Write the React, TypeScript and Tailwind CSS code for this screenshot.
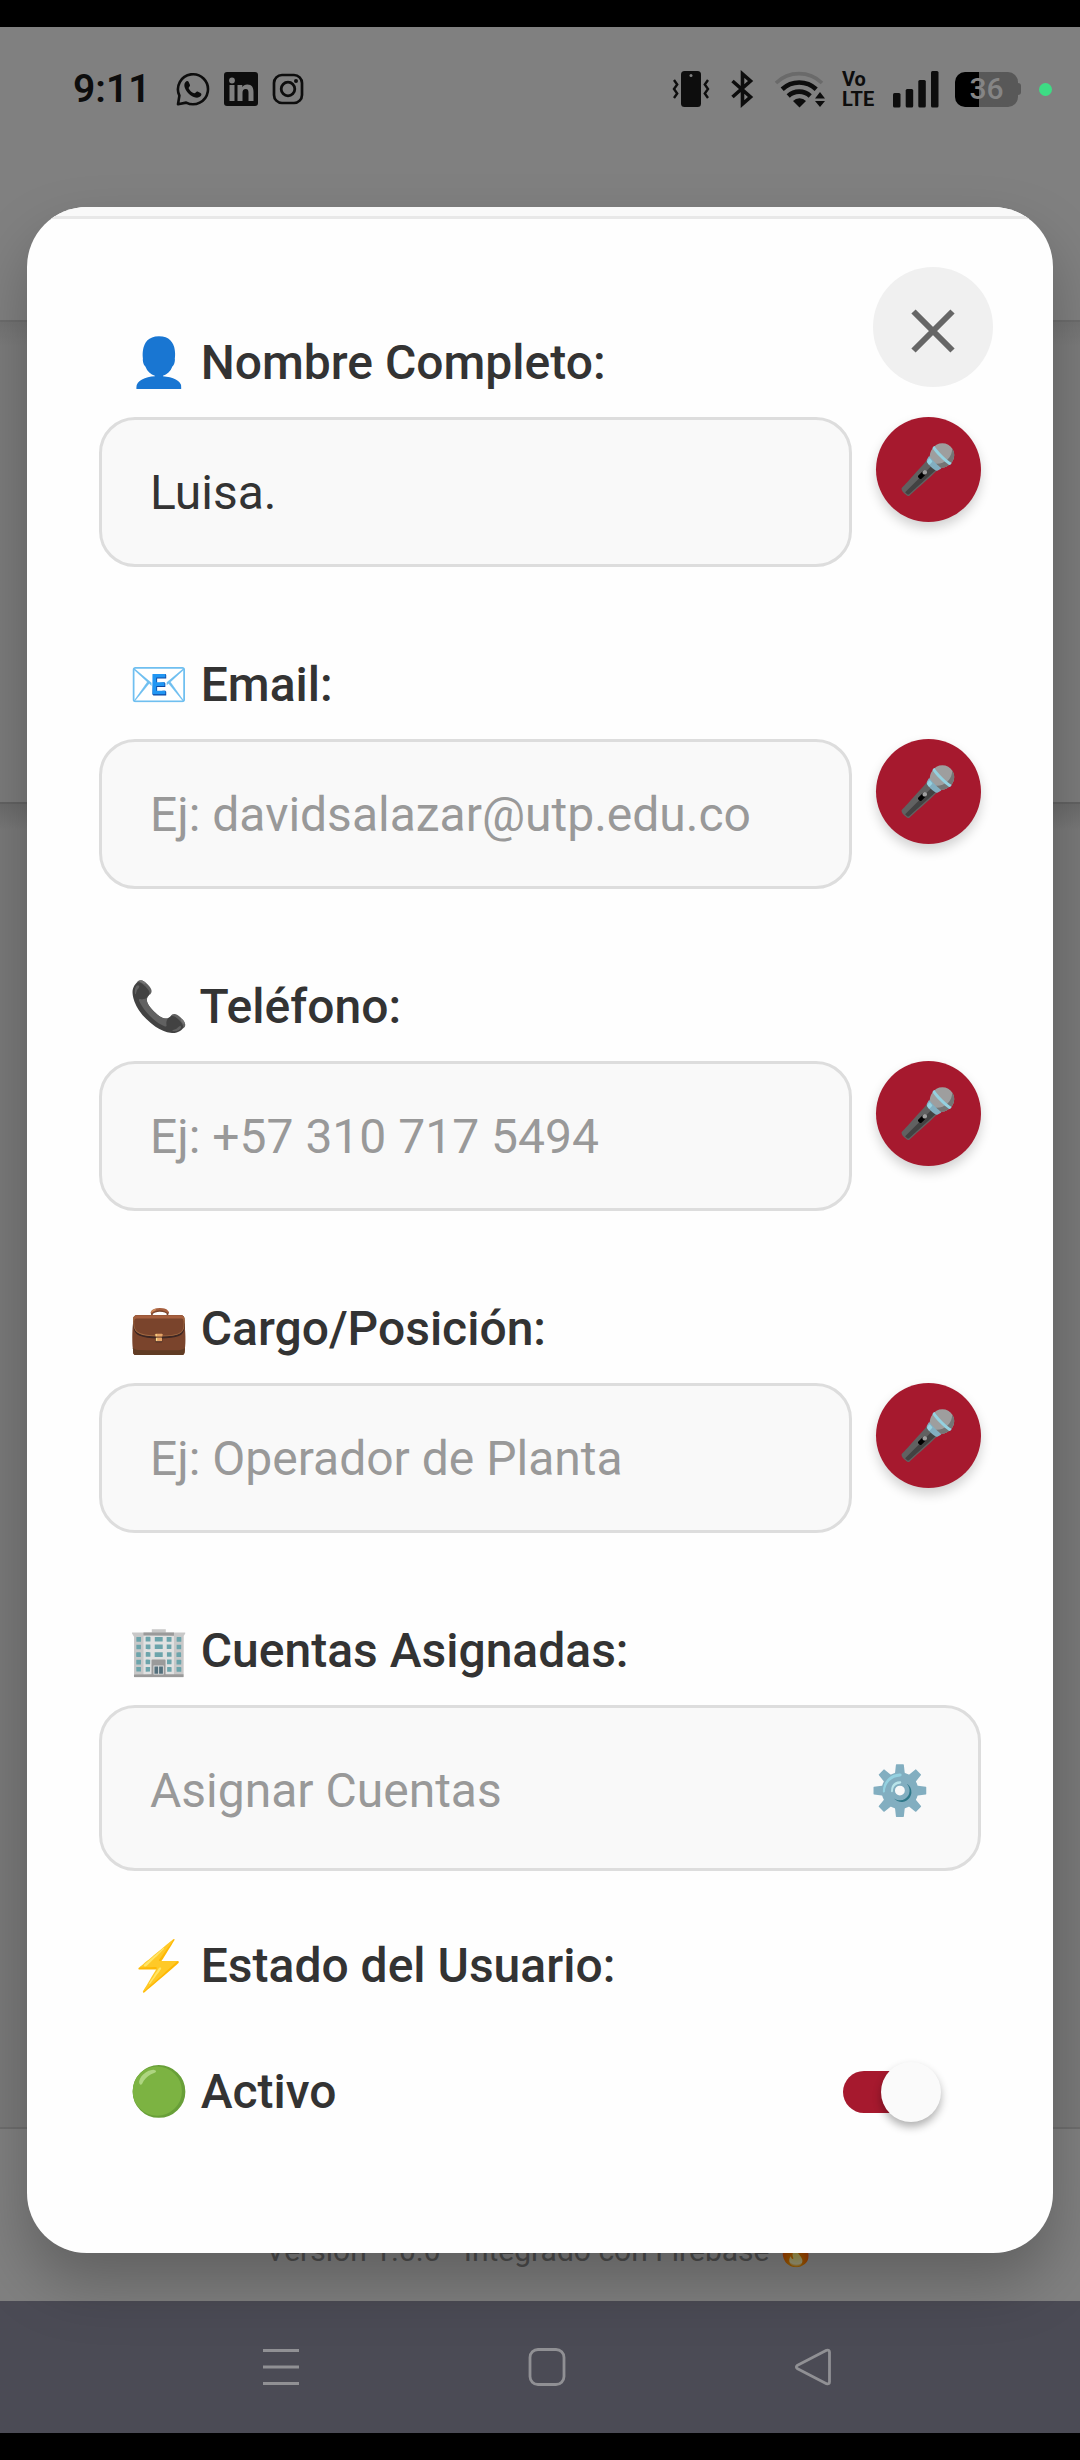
import { useId, useState } from "react";
import type { ReactNode } from "react";

const emojiFont =
  "font-['Roboto','Noto_Color_Emoji',sans-serif]";

/* ---------- Status bar icons ---------- */

function WhatsappIcon() {
  return (
    <svg viewBox="0 0 34 34" className="h-[34px] w-[34px]" fill="none" aria-hidden="true">
      <path
        d="M2 32.2 3.4 23.6A15 15 0 1 1 10.2 30.6Z"
        stroke="#0d0d0d"
        strokeWidth="2.6"
        strokeLinejoin="round"
      />
      <path
        d="M9.3 10.2c1.3-1.7 2.8-1.6 3.5 0l1.2 2.7c.5 1.3-1.9 2.3-1.3 3.5 1.200 2.300 3 4 5.400 4.900 1.200.4 2.200-2.200 3.500-1.700l2.900 1.400c1.500.8 1 2.400-.3 3.600-2.300 2-6.500.9-9.700-1.400-2.400-1.700-4.600-4.200-5.600-7.100-.7-2.100-.9-4.300.4-5.900Z"
        fill="#0d0d0d"
      />
    </svg>
  );
}

function LinkedinIcon() {
  return (
    <svg viewBox="0 0 34 34" className="h-[34px] w-[34px]" aria-hidden="true">
      <rect width="34" height="34" rx="3" fill="#0d0d0d" />
      <g fill="#808080">
        <circle cx="8" cy="8.5" r="2.9" />
        <rect x="5.5" y="13" width="5" height="16" />
        <path d="M13.5 13h4.8v2.2c.9-1.500 2.700-2.600 5-2.600 4.700 0 6.200 3 6.200 7.400v9h-5v-8.200c0-2.200-.5-3.900-2.700-3.900-2.400 0-3.300 1.700-3.300 3.900V29h-5Z" />
      </g>
    </svg>
  );
}

function InstagramIcon() {
  return (
    <svg viewBox="0 0 32 32" className="h-8 w-8" fill="none" stroke="#0d0d0d" aria-hidden="true">
      <rect x="2" y="2" width="28" height="28" rx="8" strokeWidth="2.7" />
      <circle cx="16" cy="16" r="6.8" strokeWidth="2.8" />
      <circle cx="24" cy="8" r="2" fill="#0d0d0d" stroke="none" />
    </svg>
  );
}

function VibrateIcon() {
  return (
    <svg viewBox="0 0 38 38" className="h-[38px] w-[38px]" fill="none" aria-hidden="true">
      <rect x="9" y="1" width="20" height="36" rx="3.5" fill="#0d0d0d" />
      <circle cx="19" cy="5.5" r="1.5" fill="#808080" />
      <path
        d="m2 10 3.200 4.500L2 19l3.200 4.500L2 28M36 10l-3.200 4.500L36 19l-3.200 4.500L36 28"
        stroke="#0d0d0d"
        strokeWidth="2.4"
      />
    </svg>
  );
}

function BluetoothIcon() {
  return (
    <svg viewBox="0 0 24 38" className="h-[38px] w-6" fill="none" aria-hidden="true">
      <path
        d="M2.500 11 20.500 27 12.500 34V4l8 7-18 16"
        stroke="#0d0d0d"
        strokeWidth="3.6"
      />
    </svg>
  );
}

function WifiIcon() {
  return (
    <svg viewBox="0 0 52 38" className="h-[38px] w-[52px]" fill="none" aria-hidden="true">
      <path d="M2 13a33 33 0 0 1 46 0" stroke="#6a6a6a" strokeWidth="3.6" />
      <path d="M8.200 19.200a25 25 0 0 1 34 0" stroke="#0d0d0d" strokeWidth="4.6" />
      <path d="M14.200 26a16 16 0 0 1 22 0" stroke="#0d0d0d" strokeWidth="4.6" />
      <path d="M19 31a9 9 0 0 1 13 0L25.500 37.500Z" fill="#0d0d0d" />
      <path d="m46 22 5 6.500H41ZM46 37l-5-6h10Z" fill="#0d0d0d" />
    </svg>
  );
}

function SignalIcon() {
  return (
    <svg viewBox="0 0 46 38" className="h-[38px] w-[46px]" fill="#0d0d0d" aria-hidden="true">
      <rect x="0" y="23" width="7.5" height="14.500" rx="1.5" />
      <rect x="12.7" y="19" width="7.5" height="18.500" rx="1.5" />
      <rect x="25.3" y="10" width="7.5" height="27.500" rx="1.5" />
      <rect x="38" y="1" width="7.5" height="36.500" rx="1.5" />
    </svg>
  );
}

function Battery() {
  return (
    <div className="flex items-center">
      <div className="flex h-[35px] w-[63px] items-center justify-center rounded-[10px] bg-linear-to-r from-black from-38% to-[#585858] to-38%">
        <span className="text-3xl font-medium text-[#858585]">36</span>
      </div>
      <div className="h-3 w-[3px] rounded-r-sm bg-[#585858]" />
    </div>
  );
}

function StatusBar() {
  return (
    <header className="flex h-[293px] items-start justify-between bg-[#808080] pt-[43px] pr-7 pl-[73px] text-[#0d0d0d]">
      <div className="flex h-[38px] items-center">
        <time className="text-[39px] leading-none font-semibold">9:11</time>
        <div className="ml-[26px] flex items-center gap-3.5">
          <WhatsappIcon />
          <LinkedinIcon />
          <InstagramIcon />
        </div>
      </div>
      <div className="flex h-[38px] items-center">
        <VibrateIcon />
        <div className="ml-5">
          <BluetoothIcon />
        </div>
        <div className="ml-5">
          <WifiIcon />
        </div>
        <p className="ml-4 w-8 text-xl leading-5 font-bold">
          Vo
          <br />
          LTE
        </p>
        <div className="ml-[19px]">
          <SignalIcon />
        </div>
        <div className="ml-4">
          <Battery />
        </div>
        <div className="ml-[18px] h-[13px] w-[13px] rounded-full bg-[#3ddc84]" />
      </div>
    </header>
  );
}

/* ---------- Screen behind the dialog ---------- */

function NavBar() {
  return (
    <nav className="flex h-[132px] items-center justify-center gap-[202px] bg-[#4b4b55] pl-3.5">
      <button type="button" aria-label="Recientes" className="flex h-16 w-16 items-center justify-center">
        <svg viewBox="0 0 38 38" className="h-[38px] w-[38px]" stroke="#909094" strokeWidth="3" aria-hidden="true">
          <path d="M1 2.500h36M1 19h36M1 35.500h36" />
        </svg>
      </button>
      <button type="button" aria-label="Inicio" className="flex h-16 w-16 items-center justify-center">
        <svg viewBox="0 0 38 38" className="h-[38px] w-[38px]" fill="none" stroke="#909094" strokeWidth="2.8" aria-hidden="true">
          <rect x="2" y="1.5" width="34" height="35" rx="8" />
        </svg>
      </button>
      <button type="button" aria-label="Atrás" className="flex h-16 w-16 items-center justify-center">
        <svg viewBox="0 0 38 38" className="h-[38px] w-[38px]" fill="none" stroke="#909094" strokeWidth="2.8" strokeLinejoin="round" aria-hidden="true">
          <path d="M32.500 2.300 3.600 17.200q-2.600 1.800 0 3.600L32.500 35.700q3 1 3-2V4.300q0-3-3-2Z" />
        </svg>
      </button>
    </nav>
  );
}

function Backdrop() {
  return (
    <div className="col-start-1 row-start-1 flex flex-col">
      <StatusBar />
      <div className="h-[482px] border-t-2 border-[#6d6d6d] bg-linear-to-b from-[#747474] to-[#7c7c7c] to-5%" />
      <div className="flex-1 border-t-2 border-[#636363] bg-linear-to-b from-[#6c6c6c] to-[#7a7a7a] to-2%" />
      <footer className="flex h-[174px] items-end justify-center border-t-2 border-[#6e6e6e] bg-[#808080] pb-8">
        <p className="text-3xl leading-9 text-[#4d4d4d]">
          Versión 1.0.0 - Integrado con Firebase <span className="brightness-50">🔥</span>
        </p>
      </footer>
      <NavBar />
    </div>
  );
}

/* ---------- Form ---------- */

function MicButton({ label }: { label: string }) {
  return (
    <button
      type="button"
      aria-label={`Dictar ${label}`}
      className="flex h-[105px] w-[105px] shrink-0 items-center justify-center rounded-full bg-[#a6192e] text-5xl shadow-[0_6px_12px_rgba(0,0,0,0.18)]"
    >
      🎤
    </button>
  );
}

const labelClass = "px-[30px] text-5xl leading-[56px] font-medium text-[#333333]";

function Field(props: { icon: string; label: string; type: string; placeholder?: string; value?: string }) {
  const id = useId();
  return (
    <div className="flex flex-col gap-[26px]">
      <label htmlFor={id} className={labelClass}>
        {props.icon} {props.label}:
      </label>
      <div className="flex items-start gap-6">
        <input
          id={id}
          type={props.type}
          defaultValue={props.value}
          placeholder={props.placeholder}
          className="h-[150px] min-w-0 flex-1 rounded-[36px] border-[3px] border-[#dddddd] bg-[#f9f9f9] px-12 text-5xl text-[#333333] outline-none placeholder:text-[#999999] placeholder:opacity-100"
        />
        <MicButton label={props.label} />
      </div>
    </div>
  );
}

function AccountsPicker() {
  const id = useId();
  return (
    <div className="flex flex-col gap-[26px]">
      <label htmlFor={id} className={labelClass}>
        🏢 Cuentas Asignadas:
      </label>
      <button
        id={id}
        type="button"
        className="flex h-[166px] items-center justify-between rounded-[36px] border-[3px] border-[#dddddd] bg-[#f9f9f9] px-12 pt-1.5 text-5xl"
      >
        <span className="text-[#999999]">Asignar Cuentas</span>
        <span>⚙️</span>
      </button>
    </div>
  );
}

function StatusToggle() {
  const [active, setActive] = useState(true);
  return (
    <div className="mt-[67px] flex flex-col gap-[68px]">
      <h2 className={labelClass}>⚡ Estado del Usuario:</h2>
      <label className="flex items-center justify-between pr-10">
        <span className={labelClass}>{active ? "🟢 Activo" : "🔴 Inactivo"}</span>
        <span className="relative flex h-[60px] w-[98px] items-center">
          <input
            type="checkbox"
            role="switch"
            checked={active}
            onChange={(e) => setActive(e.target.checked)}
            className="peer absolute inset-0 z-10 cursor-pointer opacity-0"
          />
          <span className="h-[42px] w-[88px] rounded-full bg-[#bbbbbb] peer-checked:bg-[#a6192e]" />
          <span className="absolute left-0 h-[60px] w-[60px] rounded-full bg-[#fafafa] shadow-[0_5px_8px_rgba(0,0,0,0.3)] peer-checked:right-0 peer-checked:left-auto" />
        </span>
      </label>
    </div>
  );
}

function Dialog({ children }: { children: ReactNode }) {
  return (
    <main
      role="dialog"
      aria-label="Usuario"
      className="relative z-10 col-start-1 row-start-1 mx-[27px] my-[180px] overflow-hidden rounded-[60px] bg-[#fefefe]"
    >
      <div className="h-3 border-b-[3px] border-[#e8e8e8] bg-[#f9f9f9]" />
      <button
        type="button"
        aria-label="Cerrar"
        className="absolute top-[60px] right-[60px] flex h-[120px] w-[120px] items-center justify-center rounded-full bg-[#f0f0f0] pt-[7px]"
      >
        <svg viewBox="0 0 44 44" className="h-11 w-11" stroke="#666666" strokeWidth="6" aria-hidden="true">
          <path d="m2.500 2.500 39 39M41.500 2.500l-39 39" />
        </svg>
      </button>
      {children}
    </main>
  );
}

export default function App() {
  return (
    <div className={`${emojiFont} min-h-screen bg-black py-[27px]`}>
      <div className="grid grid-cols-1">
        <Backdrop />
        <div className="col-start-1 row-start-1 mx-[27px] my-[180px] rounded-[60px] shadow-[0_30px_60px_rgba(0,0,0,0.25)]" />
        <Dialog>
          <form className="px-[72px] pt-[116px] pb-[131px]">
            <div className="flex flex-col gap-[90px]">
              <Field icon="👤" label="Nombre Completo" type="text" value="Luisa." />
              <Field icon="📧" label="Email" type="email" placeholder="Ej: davidsalazar@utp.edu.co" />
              <Field icon="📞" label="Teléfono" type="tel" placeholder="Ej: +57 310 717 5494" />
              <Field icon="💼" label="Cargo/Posición" type="text" placeholder="Ej: Operador de Planta" />
              <AccountsPicker />
            </div>
            <StatusToggle />
          </form>
        </Dialog>
      </div>
    </div>
  );
}
